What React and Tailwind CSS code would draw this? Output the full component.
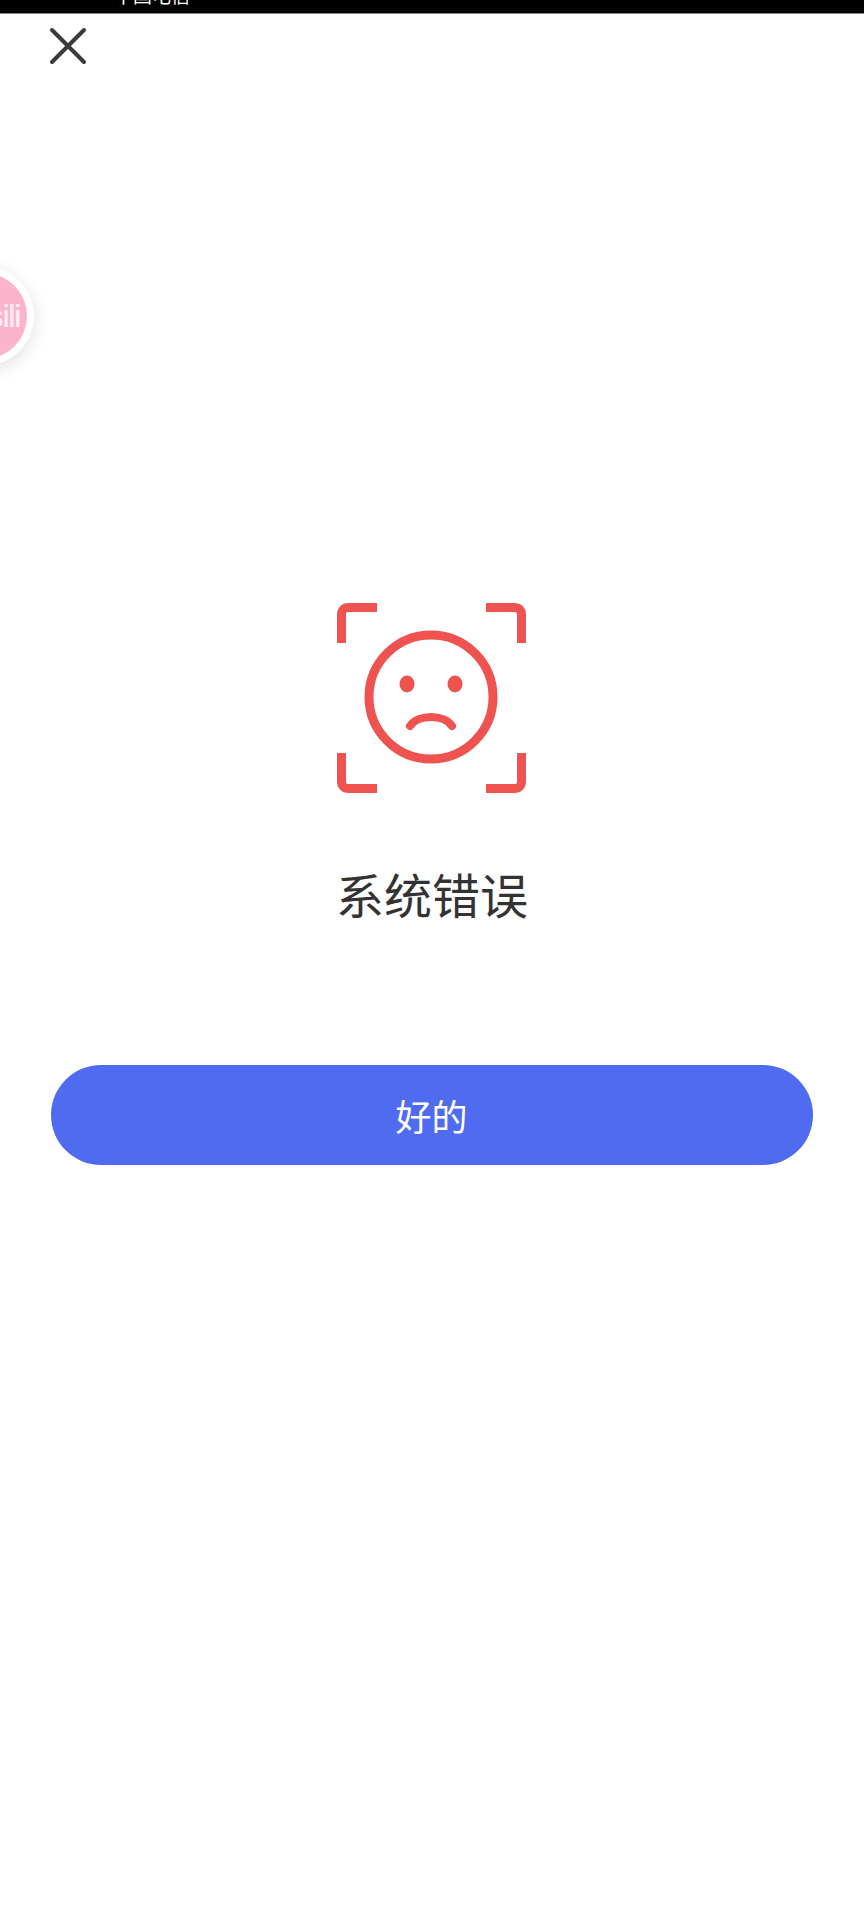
export default function App() {
  return (
    <div className="relative w-[864px] h-[1920px] overflow-hidden bg-white flex flex-col items-center font-['Roboto','Noto_Sans_CJK_SC',sans-serif]">
      <div className="w-full h-[14px] shrink-0 bg-black overflow-hidden border-b border-[#888] relative">
        <div className="absolute left-[114px] top-[-17px] text-[19px] leading-[24px] text-white font-['Noto_Sans_CJK_SC',sans-serif]">中国电信</div>
      </div>
      <div className="w-full shrink-0 pl-[48px] pt-[12px] h-[588px]">
        <svg width="40" height="40" viewBox="0 0 40 40" fill="none">
          <path d="M4 4 L36 36 M36 4 L4 36" stroke="#3a3a3a" strokeWidth="4" strokeLinecap="round" />
        </svg>
      </div>
      <svg width="192" height="192" viewBox="0 0 192 192" fill="none" className="shrink-0 ml-[-1px]">
        <g stroke="#ef5350" strokeWidth="9">
          <path d="M5.5 41 V13 Q5.5 5.5 13 5.5 H41" />
          <path d="M150 5.5 H178 Q185.5 5.5 185.5 13 V41" />
          <path d="M5.5 151 V179 Q5.5 186.5 13 186.5 H41" />
          <path d="M150 186.5 H178 Q185.5 186.5 185.5 179 V151" />
        </g>
        <circle cx="95" cy="95" r="62" stroke="#ef5350" strokeWidth="9" />
        <ellipse cx="71" cy="82" rx="7.5" ry="8.5" fill="#ef5350" />
        <ellipse cx="119" cy="82" rx="7.5" ry="8.5" fill="#ef5350" />
        <path d="M74 124 C82 112 108 112 116 124" stroke="#ef5350" strokeWidth="8" strokeLinecap="round" />
      </svg>
      <div className="mt-[65px] text-[48px] leading-[68px] text-[#333] font-['Noto_Sans_CJK_SC',sans-serif]">系统错误</div>
      <button className="mt-[138px] w-[762px] h-[100px] rounded-full bg-[#4f6bf0] text-white text-[36px] font-['Noto_Sans_CJK_SC',sans-serif] ml-[-1px]">好的</button>
      <div className="absolute left-[-66px] top-[266px] w-[100px] h-[100px] rounded-full bg-white shadow-[0_4px_18px_rgba(0,0,0,0.12)] flex items-center justify-center">
        <div className="w-[86px] h-[86px] rounded-full bg-[#fbb4cc] flex items-center justify-end pr-[2px] overflow-hidden">
          <span className="text-[32px] leading-none font-bold text-white/75 font-['Liberation_Sans',sans-serif] tracking-[-1px] scale-x-75">sili</span>
        </div>
      </div>
    </div>
  );
}
